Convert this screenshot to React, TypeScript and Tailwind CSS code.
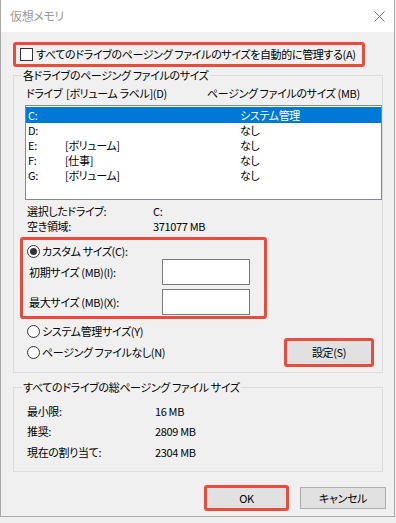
import React from 'react';

const RED = 'border-[#e74c3c]';

function Radio({ checked = false }: { checked?: boolean }) {
  return (
    <span className="flex h-[13px] w-[13px] shrink-0 items-center justify-center rounded-full border border-[#333] bg-white">
      {checked && <span className="h-[7px] w-[7px] rounded-full bg-[#333]" />}
    </span>
  );
}

function GroupBox({
  label,
  className,
  children
}: {
  label: string;
  className?: string;
  children: React.ReactNode;
}) {
  return (
    <div className={`relative ml-[12px] w-[370px] border border-[#dcdcdc] ${className ?? ''}`}>
      <span className="absolute -top-[8px] left-[8px] bg-[#f0f0f0] px-[1px] leading-[15px]">{label}</span>
      {children}
    </div>
  );
}

const drives = [
  { letter: 'C:', label: '', size: 'システム管理' },
  { letter: 'D:', label: '', size: 'なし' },
  { letter: 'E:', label: '[ボリューム]', size: 'なし' },
  { letter: 'F:', label: '[仕事]', size: 'なし' },
  { letter: 'G:', label: '[ボリューム]', size: 'なし' }
];

const totals = [
  { label: '最小限:', value: '16 MB' },
  { label: '推奨:', value: '2809 MB' },
  { label: '現在の割り当て:', value: '2304 MB' }
];

export default function App() {
  return (
    <div
      className="h-[523px] w-[396px] whitespace-nowrap bg-[#efefef] text-[11px] tracking-[-0.35px] text-black [font-feature-settings:'palt']"
      style={{ fontFamily: '"Noto Sans CJK JP", "Noto Sans", sans-serif' }}
    >
      <div className="flex h-[517px] w-[395px] flex-col border-x border-b border-[#a9a9a9] bg-[#f0f0f0]">
        {/* title bar */}
        <div className="flex h-[32px] shrink-0 items-center justify-between bg-white pl-[9px] pr-[8px]">
          <span className="text-[12px] text-[#999]">仮想メモリ</span>
          <svg width="11" height="11" viewBox="0 0 11 11" className="mr-[1px]">
            <path d="M0.5 0.5 L10.5 10.5 M10.5 0.5 L0.5 10.5" stroke="#777" strokeWidth="1" fill="none" />
          </svg>
        </div>

        {/* auto manage */}
        <div className={`ml-[12px] mt-[10px] flex h-[25px] w-[352px] items-center gap-[3px] rounded-[3px] border-[3px] ${RED} pl-[4px]`}>
          <span className="h-[13px] w-[13px] shrink-0 border border-[#333] bg-white" />
          <span className="leading-[15px]">すべてのドライブのページング ファイルのサイズを自動的に管理する(A)</span>
        </div>

        <GroupBox label="各ドライブのページング ファイルのサイズ" className="mt-[8px] h-[298px]">
          <div className="ml-[12px] mt-[10px] flex h-[15px] items-center leading-[15px]">
            <span className="w-[40px]">ドライブ</span>
            <span className="w-[141px]">[ボリューム ラベル](D)</span>
            <span>ページング ファイルのサイズ (MB)</span>
          </div>

          <div className="ml-[11px] mt-[4px] h-[95px] w-[357px] border border-[#828790] bg-white pt-[1px]">
            {drives.map((d, i) => (
              <div
                key={d.letter}
                className={`flex items-center leading-[15px] ${i === 0 ? 'h-[16px] bg-[#0078d7] text-white' : 'h-[15px]'}`}
              >
                <span className="w-[39px] pl-[2px]">{d.letter}</span>
                <span className="w-[175px]">{d.label}</span>
                <span>{d.size}</span>
              </div>
            ))}
          </div>

          <div className="ml-[13px] mt-[4px] flex h-[15px] items-center leading-[15px]">
            <span className="w-[126px]">選択したドライブ:</span>
            <span>C:</span>
          </div>
          <div className="ml-[13px] flex h-[15px] items-center leading-[15px]">
            <span className="w-[126px]">空き領域:</span>
            <span>371077 MB</span>
          </div>

          {/* custom size */}
          <div className={`ml-[6px] mt-[3px] h-[82px] w-[247px] rounded-[3px] border-[3px] ${RED}`}>
            <div className="ml-[4px] mt-[4px] flex h-[15px] items-center gap-[2px] leading-[15px]">
              <Radio checked />
              <span>カスタム サイズ(C):</span>
            </div>
            <div className="flex h-[26px] items-center pl-[6px]">
              <span className="w-[133px] leading-[15px]">初期サイズ (MB)(I):</span>
              <span className="h-[26px] w-[88px] border border-[#7a7a7a] bg-white" />
            </div>
            <div className="mt-[4px] flex h-[26px] items-center pl-[6px]">
              <span className="w-[133px] leading-[15px]">最大サイズ (MB)(X):</span>
              <span className="h-[26px] w-[88px] border border-[#7a7a7a] bg-white" />
            </div>
          </div>

          <div className="ml-[13px] mt-[5px] flex h-[14px] items-center gap-[2px] leading-[15px]">
            <Radio />
            <span>システム管理サイズ(Y)</span>
          </div>
          <div className="ml-[13px] mr-[8px] flex h-[29px] items-center justify-between">
            <div className="flex items-center gap-[2px] leading-[15px]">
              <Radio />
              <span>ページング ファイルなし(N)</span>
            </div>
            <div className={`flex h-[29px] w-[90px] items-center justify-center rounded-[3px] border-[3px] ${RED} bg-[#e1e1e1]`}>
              <span className="leading-[15px]">設定(S)</span>
            </div>
          </div>
        </GroupBox>

        <GroupBox label="すべてのドライブの総ページング ファイル サイズ" className="mt-[14px] h-[85px] pt-[13px]">
          {totals.map((t) => (
            <div key={t.label} className="ml-[13px] flex h-[20.5px] items-center leading-[15px]">
              <span className="w-[128px]">{t.label}</span>
              <span>{t.value}</span>
            </div>
          ))}
        </GroupBox>

        <div className="mt-[13px] flex items-center justify-end gap-[11px] pr-[8px]">
          <div className={`flex h-[26px] w-[85px] items-center justify-center rounded-[3px] border-[3px] ${RED} bg-[#e1e1e1]`}>
            <span className="leading-[15px]">OK</span>
          </div>
          <div className="flex h-[22px] w-[86px] items-center justify-center border border-[#adadad] bg-[#e1e1e1]">
            <span className="leading-[15px]">キャンセル</span>
          </div>
        </div>
      </div>
    </div>
  );
}
